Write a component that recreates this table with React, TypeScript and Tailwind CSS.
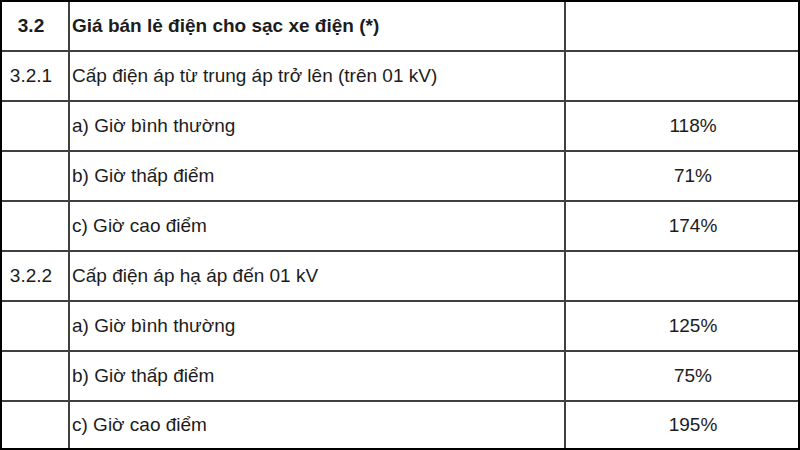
type Row = {
  code?: string;
  label: string;
  value?: string;
  bold?: boolean;
};

const rows: Row[] = [
  { code: '3.2', label: 'Giá bán lẻ điện cho sạc xe điện (*)', bold: true },
  { code: '3.2.1', label: 'Cấp điện áp từ trung áp trở lên (trên 01 kV)' },
  { label: 'a) Giờ bình thường', value: '118%' },
  { label: 'b) Giờ thấp điểm', value: '71%' },
  { label: 'c) Giờ cao điểm', value: '174%' },
  { code: '3.2.2', label: 'Cấp điện áp hạ áp đến 01 kV' },
  { label: 'a) Giờ bình thường', value: '125%' },
  { label: 'b) Giờ thấp điểm', value: '75%' },
  { label: 'c) Giờ cao điểm', value: '195%' },
];

export default function App() {
  return (
    <div className="h-[450px] w-[800px] overflow-hidden bg-white text-[19px] text-[#1c1c1c] [font-family:'Liberation_Sans',Arial,sans-serif]">
      <div className="flex h-full w-full flex-col border-2 border-black">
        {rows.map((row, i) => (
          <div
            key={i}
            className={[
              'flex h-[50px] shrink-0',
              i < rows.length - 1 ? 'border-b-2 border-[#404040]' : 'flex-1',
            ].join(' ')}
          >
            <div
              className={[
                'flex w-[68px] items-center justify-center border-r-2 border-[#404040] pr-[8px]',
                row.bold ? 'font-bold' : '',
              ].join(' ')}
            >
              {row.code}
            </div>
            <div
              className={[
                'flex w-[496px] items-center border-r-2 border-[#404040] pl-[2px]',
                row.bold ? 'font-bold' : '',
              ].join(' ')}
            >
              {row.label}
            </div>
            <div className="flex flex-1 items-center justify-center pl-[22px]">{row.value}</div>
          </div>
        ))}
      </div>
    </div>
  );
}
